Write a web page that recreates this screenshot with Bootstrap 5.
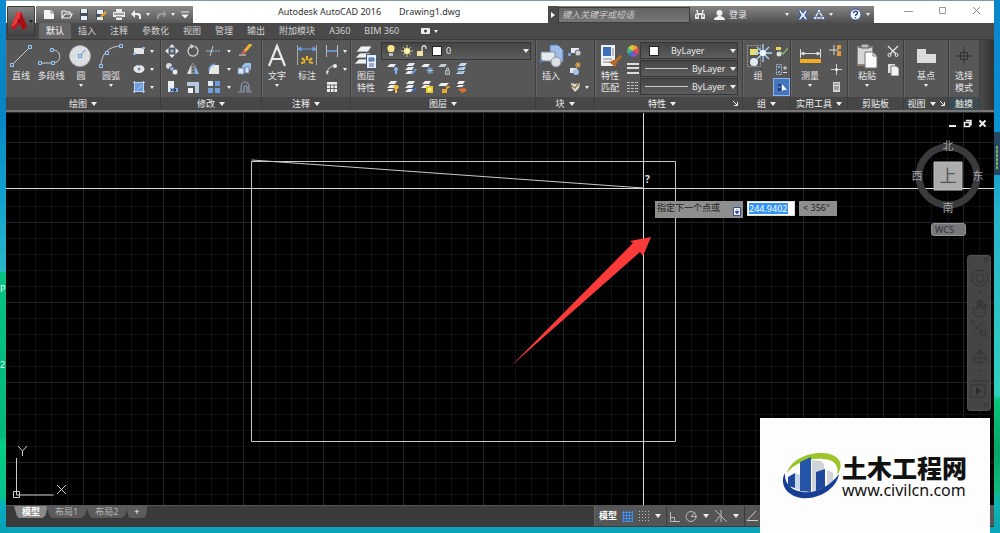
<!DOCTYPE html>
<html lang="zh-CN">
<head>
<meta charset="utf-8">
<meta name="viewport" content="width=device-width, initial-scale=1">
<title>Autodesk AutoCAD 2016 - Drawing1.dwg</title>
<link href="https://cdn.jsdelivr.net/npm/bootstrap@5.3.0/dist/css/bootstrap.min.css" rel="stylesheet">
<style>
  body { font: 9px/12px "Noto Sans", "Noto Sans CJK SC", sans-serif; color: #e4e4e4; background: #0a9fb4; overflow: hidden; }
  button { font: inherit; color: inherit; background: none; border: 0; padding: 0; }
  a { color: inherit; text-decoration: none; }
  svg { display: block; flex: none; }
  .edge { width: 6px; flex: none; overflow: hidden; }
  .edge-l { background: linear-gradient(#0b8bd0 0, #0784c6 20%, #12a3cf 38%, #2bb8c8 51%, #06c282 51%, #05b87c 82%, #07cf84 83%, #05c38c 93%, #0aaec0 95%, #08a0b8 100%); color: #e8fff4; }
  .edge-r { background: linear-gradient(#0b86cc 0, #0a93d2 25%, #27b3cb 40%, #2fd0c0 74%, #08c67c 75%, #06a468 85%, #12bb7c 92%, #0fb4ae 94%, #0aa4b8 100%); }
  .gadget { margin-top: 132px; height: 43px; background: repeating-linear-gradient(#7fae58 0 3px, #39605c 3px 4px); border: 2px solid #274765; border-top-width: 14px; border-bottom-width: 5px; }
  .app-head { background: linear-gradient(#8399a8 0 1px, #fff 1px 23px, #474747 23px); }
  .app-btn { width: 28px; height: 30px; margin: 6px 1px -1px 1px; background: linear-gradient(#858585, #555 60%, #444); border: 1px solid #3c3c3c; border-radius: 1px; flex: none; z-index: 1; gap: 1px; }
  .titlebar { height: 23px; padding-top: 6px; color: #303030; }
  .qat { width: 157px; background: linear-gradient(#8b8b8b, #585858); gap: 6px; padding: 0 4px 0 7px; }
  .doc-title { line-height: 12px; gap: 18px; padding-left: 85px; white-space: nowrap; }
  .info { width: 326px; background: linear-gradient(#858585, #4f4f4f); color: #e6e6e6; }
  .info-arrow { width: 10px; height: 17px; background: #4a4a4a; }
  .search { width: 132px; height: 16px; border: 1px solid #3d3d3d; border-radius: 0; background: linear-gradient(#626262, #777); color: #ddd; font: italic 9px "Noto Sans", "Noto Sans CJK SC", sans-serif; padding: 0 3px; }
  .search::placeholder { color: #c9c9c9; opacity: 1; }
  .wc { width: 120px; gap: 25px; padding-right: 13px; }
  .tabs { height: 16px; background: #4a4a4a; color: #d2d2d2; padding-left: 3px; }
  .tabs button { padding: 0 7px; height: 16px; }
  .tabs button.on { background: #666; color: #fff; border-radius: 2px 2px 0 0; }
  .ribbon { background: #575757; height: 73px; border-top: 1px solid #3c3c3c; border-bottom: 2px solid #777; }
  .panel { border-right: 1px solid #3d3d3d; box-shadow: inset 1px 0 0 #666; flex: none; }
  .panel-body { height: 57px; padding-top: 2px; }
  .panel-foot { height: 13px; background: #474747; color: #eee; gap: 4px; }
  .big { width: 30px; height: 55px; display: flex; flex-direction: column; align-items: center; flex: none; color: #e6e6e6; white-space: nowrap; }
  .big span { line-height: 12px; }
  .big svg { height: 28px; width: 28px; }
  .big .tri { margin-top: 2px; }
  .tri { width: 0; height: 0; border: 3px solid transparent; border-top: 4px solid #eee; border-bottom: 0; flex: none; }
  .tri-s { border-width: 2px; border-top-width: 3px; }
  .rows { display: grid; grid-auto-rows: 18px; align-items: center; align-content: start; justify-items: center; }
  .rows button { height: 16px; }
  .combo { height: 17px; border: 1px solid #363636; background: linear-gradient(#454545, #5d5d5d); padding: 0 1px 0 3px; }
  .combo select { appearance: none; background: none; border: 0; color: #e8e8e8; font: inherit; padding: 0; outline: 0; flex: 1; min-width: 0; }
  .swatch { width: 10px; height: 10px; background: #fff; border: 1px solid #222; }
  .rest { background: linear-gradient(90deg, #4a4a4a, #333); }
  .canvas { min-height: 0; background-color: #000;
    background-image: linear-gradient(90deg, #1f2424 1px, transparent 1px), linear-gradient(#1f2424 1px, transparent 1px), linear-gradient(90deg, #0f1112 1px, transparent 1px), linear-gradient(#0f1112 1px, transparent 1px);
    background-size: 80px 80px, 80px 80px, 16px 16px, 16px 16px; background-position: 77px 29px, 77px 29px, 13px 13px, 13px 13px; border-top: 1px solid #2b2b2b; }
  .dyn { left: 649px; top: 88px; gap: 4px; color: #222; line-height: 14px; }
  .dyn-prompt { width: 88px; height: 17px; background: #8e8e8e; padding: 0 2px; }
  .dyn-value { width: 48px; height: 15px; background: #fff; border: 1px solid #ddd; padding: 1px; }
  .dyn-value input { width: 39px; height: 11px; border: 0; padding: 0; background: #3295f5; color: #fff; font: 9px/11px "Noto Sans", sans-serif; }
  .dyn-angle { width: 38px; height: 15px; background: #8e8e8e; padding-left: 4px; }
  .ucs-cube { right: 10px; top: 26px; width: 76px; }
  .doc-wc { right: 7px; top: 6px; gap: 6px; }
  .wcs { width: 35px; height: 13px; border-radius: 3px; background: #77777c; border: 1px solid #929297; color: #333; text-align: left; padding-left: 3px; line-height: 10px; margin-right: 18px; }
  .navbar-strip { right: 3px; top: 142px; width: 24px; height: 156px; background: #454545; border: 1px solid #505050; border-radius: 3px; }
  .foot { height: 22px; background: #3a3a3a; border-top: 1px solid #555; }
  .sheet { height: 12px; padding: 0 10px 0 9px; background: #5b5b5b; color: #b8b8b8; clip-path: polygon(0 0, 100% 0, 92% 80%, 84% 100%, 14% 100%, 8% 80%); margin-right: -2px; line-height: 12px; }
  .sheet.on { background: #8a8a8a; color: #fff; font-weight: 700; padding: 0 8px; }
  .status { width: 400px; background: #555; border-left: 1px solid #666; height: 20px; }
  .status button { height: 18px; }
  .status .opt { padding: 0 5px; }
  .status .sep { width: 1px; height: 20px; background: #3b3b3b; }
  .watermark { right: 10px; bottom: 0; width: 230px; height: 115px; background: #fdfdfd; color: #111; padding: 0 20px 0 22px; z-index: 5; }
  .wm-name { font: 900 25px/28px "Noto Sans CJK SC", sans-serif; }
  .wm-url { font: 16px/18px "Noto Sans", sans-serif; color: #111; }
</style>
</head>
<body>
<div class="d-flex vh-100 position-relative">
  <div class="edge edge-l d-flex flex-column justify-content-end">
    <div style="height:250px"><div>P</div><div class="mt-5 pt-3">2</div></div>
  </div>

  <div class="flex-grow-1 d-flex flex-column" style="min-width:0">
    <header class="app-head d-flex">
      <button class="app-btn d-flex align-items-center justify-content-center" aria-label="应用程序菜单">
        <svg width="18" height="20" viewBox="0 0 18 20"><path d="M7 1h4l6 15-4 3-3-5H8l-4 5-3-3z" fill="#c5141b"/><path d="M7 1h4l-2 8-4 5-4 2z" fill="#e8393b"/><path d="M9 7l2 5H7z" fill="#7a1012"/><path d="M11 1l6 15-4 3-3-7z" fill="#a80f15"/></svg>
        <span class="tri tri-s" style="border-top-color:#222"></span>
      </button>
      <div class="flex-grow-1">
        <div class="titlebar d-flex">
          <div class="qat d-flex align-items-center">
            <button aria-label="新建"><svg width="12" height="11" viewBox="0 0 12 11"><path d="M1 1h7l3 3v6H1z" fill="#f4f4f4"/><path d="M8 1v3h3" stroke="#888" fill="none"/></svg></button>
            <button aria-label="打开"><svg width="12" height="11" viewBox="0 0 12 11"><path d="M1 9V2h3l1 1h4v2M1 9l3-4h7L9 9z" fill="none" stroke="#eee" stroke-width="1.2"/></svg></button>
            <button aria-label="保存"><svg width="10" height="11" viewBox="0 0 10 11"><path d="M1 0h8v11H1z" fill="#46505c"/><path d="M2 0h6v4H2zM2 7h6v4H2z" fill="#e6eef6"/></svg></button>
            <button aria-label="另存为"><svg width="12" height="12" viewBox="0 0 12 12"><path d="M1 1h8v10H1z" fill="#46505c"/><path d="M2 1h6v4H2zM2 8h6v3H2z" fill="#e6eef6"/><path d="M5 7l5-5 2 2-6 5z" fill="#e8a33a"/></svg></button>
            <button aria-label="打印"><svg width="12" height="11" viewBox="0 0 12 11"><path d="M3 0h6v3h3v5H9v3H3V8H0V3h3z" fill="#ececec"/><path d="M1 5h10M3 8h6" stroke="#555"/></svg></button>
            <button class="d-flex align-items-center gap-1" aria-label="放弃"><svg width="11" height="10" viewBox="0 0 11 10"><path d="M4 0v3h3c2 0 3 1 3 3v3H8V7c0-1-1-2-2-2H4v3L0 4z" fill="#eee"/></svg><span class="tri tri-s"></span></button>
            <button class="d-flex align-items-center gap-1" aria-label="重做"><svg width="11" height="10" viewBox="0 0 11 10"><path d="M7 0v3H4C2 3 1 4 1 6v3h2V7c0-1 1-2 2-2h2v3l4-4z" fill="#999"/></svg><span class="tri tri-s"></span></button>
            <button aria-label="自定义"><svg width="8" height="8" viewBox="0 0 8 8"><path d="M0 1h8M1 4h6L4 7z" fill="#eee" stroke="#eee"/></svg></button>
          </div>
          <div class="doc-title flex-grow-1 d-flex"><span>Autodesk AutoCAD 2016</span><span>Drawing1.dwg</span></div>
          <div class="info d-flex align-items-center">
            <button class="info-arrow d-flex align-items-center justify-content-center" aria-label="折叠"><svg width="4" height="6" viewBox="0 0 4 6"><path d="M0 0l4 3-4 3z" fill="#fff"/></svg></button>
            <input class="search" placeholder="键入关键字或短语" aria-label="键入关键字或短语">
            <button class="ms-1" aria-label="搜索"><svg width="12" height="11" viewBox="0 0 12 11"><path d="M2 1h2v3h4V1h2l1 5v4H7V6H5v4H1V6z" fill="#e8e8e8"/><path d="M2 7h2M8 7h2M2 2v3M10 2v3" stroke="#444"/></svg></button>
            <button class="d-flex align-items-center ms-2" aria-label="登录"><svg class="me-1" width="11" height="12" viewBox="0 0 11 12"><circle cx="5.500" cy="4" r="3" fill="#f0f0f0"/><path d="M0 11c0-3 3-3 4-4h3c1 1 4 1 4 4z" fill="#f0f0f0"/></svg>登录</button>
            <button class="ms-auto" aria-label="登录菜单"><span class="tri tri-s d-block"></span></button>
            <button class="ms-2" aria-label="Exchange"><svg width="12" height="10" viewBox="0 0 12 10"><path d="M1 0h3l2 3 2-3h3L8 5l3 5H8L6 7l-2 3H1l3-5z" fill="#dce8ff" stroke="#2c4b9b"/></svg></button>
            <button class="ms-1 d-flex align-items-center" aria-label="Autodesk 360"><svg width="12" height="11" viewBox="0 0 12 11"><path d="M6 2L2 9h8z" fill="none" stroke="#d8e4fb" stroke-width="1.500"/><g fill="#eaf0ff" stroke="#3a57a0" stroke-width=".7"><circle cx="6" cy="2" r="1.700"/><circle cx="2" cy="9" r="1.600"/><circle cx="10" cy="9" r="1.600"/></g></svg><span class="tri tri-s ms-1"></span></button>
            <button class="ms-3 me-1 d-flex align-items-center" aria-label="帮助"><svg width="13" height="13" viewBox="0 0 13 13"><circle cx="6.500" cy="6.500" r="5.500" fill="#f3f6ff" stroke="#34508f"/><path d="M4.500 5.300c0-3 4-2.600 4-.3 0 1.500-2 1.300-2 3M6.500 9v1.300" fill="none" stroke="#22407f" stroke-width="1.400"/></svg><span class="tri tri-s ms-1"></span></button>
          </div>
          <div class="wc d-flex align-items-start justify-content-end">
            <button aria-label="最小化"><svg width="9" height="9" viewBox="0 0 9 9"><path d="M0 5.500h9" stroke="#999"/></svg></button>
            <button aria-label="最大化"><svg width="9" height="9" viewBox="0 0 9 9"><path d="M1.500 1.500h6v6h-6z" fill="none" stroke="#999"/></svg></button>
            <button aria-label="关闭"><svg width="9" height="9" viewBox="0 0 9 9"><path d="M1 1l7 7M8 1l-7 7" stroke="#888"/></svg></button>
          </div>
        </div>
        <nav class="tabs d-flex">
          <button class="on">默认</button><button>插入</button><button>注释</button><button>参数化</button><button>视图</button><button>管理</button><button>输出</button><button>附加模块</button><button>A360</button><button>BIM 360</button>
          <button class="d-flex align-items-center gap-1 ms-2" aria-label="显示选项"><svg width="9" height="6" viewBox="0 0 9 6"><rect width="9" height="6" rx="1" fill="#eee"/><circle cx="4.500" cy="3" r="1.500" fill="#444"/></svg><span class="tri tri-s"></span></button>
        </nav>
      </div>
    </header>

    <section class="ribbon d-flex">
      <div class="panel" style="width:155px">
        <div class="panel-body d-flex">
          <button class="big"><svg viewBox="0 0 28 28"><path d="M5 23L23 5" stroke="#ccc"/><path d="M3.500 21.500h3v3h-3zM21.500 3.500h3v3h-3z" fill="#41638f" stroke="#9fc4ee"/></svg><span>直线</span></button>
          <button class="big"><svg viewBox="0 0 28 28"><path d="M3 21h13c9 0 9-13 0-13h-1" fill="none" stroke="#ccc"/><path d="M1.500 19.500h3v3h-3zM14.500 19.500h3v3h-3zM13.500 6.500h3v3h-3z" fill="#41638f" stroke="#9fc4ee"/></svg><span>多段线</span></button>
          <button class="big"><svg viewBox="0 0 28 28"><circle cx="13" cy="14" r="10.500" fill="#dcdfe2" stroke="#aaa"/><path d="M13 14l5-6" stroke="#5e8fd0"/><path d="M11.500 12.500h3v3h-3z" fill="#dce8f8" stroke="#5e8fd0"/></svg><span>圆</span><i class="tri tri-s"></i></button>
          <button class="big"><svg viewBox="0 0 28 28"><path d="M4 24C4 12 12 4 24 4" fill="none" stroke="#ccc"/><path d="M2.500 22.500h3v3h-3zM8.500 9.500h3v3h-3zM22.500 2.500h3v3h-3z" fill="#41638f" stroke="#9fc4ee"/></svg><span>圆弧</span><i class="tri tri-s"></i></button>
          <div class="rows ms-1" style="grid-template-columns:18px 8px">
            <button aria-label="矩形"><svg width="14" height="14" viewBox="0 0 14 14"><path d="M2 4h10v6H2z" fill="#e6e6e6"/><path d="M1 9h3v2H1zM10 3h3v2h-3z" fill="#86b4ea"/></svg></button><span class="tri tri-s"></span>
            <button aria-label="椭圆"><svg width="14" height="14" viewBox="0 0 14 14"><ellipse cx="7" cy="7" rx="5.500" ry="4" fill="#e6e6e6"/><path d="M5.500 7h3M7 5.500v3M7 2v2" stroke="#3c6cae"/></svg></button><span class="tri tri-s"></span>
            <button aria-label="图案填充"><svg width="14" height="14" viewBox="0 0 14 14"><path d="M3 3h8v8H3z" fill="#6f9ddb"/><path d="M1 2.500h12M1 11.500h12M2.500 1v12M11.500 1v12" stroke="#b8d4f4"/><path d="M5 10l5-5" stroke="#9cc2f2"/></svg></button><span class="tri tri-s"></span>
          </div>
        </div>
        <div class="panel-foot d-flex align-items-center justify-content-center">绘图<span class="tri"></span></div>
      </div>

      <div class="panel" style="width:101px">
        <div class="panel-body rows" style="grid-template-columns:21px 21px 21px 9px 23px">
          <button aria-label="移动"><svg width="14" height="14" viewBox="0 0 14 14"><path d="M7 0l3 3.500H4zM7 14l3-3.500H4zM0 7l3.500-3v6zM14 7l-3.500-3v6z" fill="#e4e8ee"/><path d="M5.500 5.500h3v3h-3z" fill="#8fb9ec"/></svg></button>
          <button aria-label="旋转"><svg width="14" height="14" viewBox="0 0 14 14"><path d="M5 2.500a5 5 0 1 0 4 0" fill="none" stroke="#c4cad2" stroke-width="1.400"/><path d="M4 0l5 2-4 3z" fill="#c4cad2"/></svg></button>
          <button aria-label="修剪"><svg width="16" height="14" viewBox="0 0 16 14"><path d="M0 7h8" stroke="#8cb8ee"/><path d="M9 7h6" stroke="#8cb8ee" stroke-dasharray="2 1"/><path d="M7 2L4 12" stroke="#ccc"/></svg></button><span class="tri tri-s"></span>
          <button aria-label="删除"><svg width="14" height="14" viewBox="0 0 14 14"><path d="M13 0L6 8" stroke="#efae2f" stroke-width="3"/><path d="M7 7l-3 3" stroke="#ce5a66" stroke-width="3"/><path d="M1 11h7" stroke="#ddd"/></svg></button>
          <button aria-label="复制"><svg width="14" height="14" viewBox="0 0 14 14"><circle cx="4" cy="4" r="3" fill="#d8dce2"/><circle cx="7" cy="7" r="2.500" fill="#9cbce6" stroke="#445"/><circle cx="10" cy="10" r="3" fill="#e8ecf1" stroke="#667"/></svg></button>
          <button aria-label="镜像"><svg width="14" height="14" viewBox="0 0 14 14"><path d="M5.500 2v10H1z" fill="#d9dfe6"/><path d="M8.500 2v10H13z" fill="#8fb3e0"/><path d="M7 1v12" stroke="#aaa" stroke-dasharray="2 1"/></svg></button>
          <button aria-label="圆角"><svg width="14" height="14" viewBox="0 0 14 14"><path d="M2 12V8q0-5 5-5h5v9z" fill="#e5e5e5"/><path d="M2 9q0-6 6-7" fill="none" stroke="#6ea0e0" stroke-width="1.500"/></svg></button><span class="tri tri-s"></span>
          <button aria-label="分解"><svg width="15" height="14" viewBox="0 0 15 14"><path d="M5 4l3-3h6v6l-3 3H5z" fill="#9ebfe8"/><path d="M1 6h6v6H1zM8 5h4v6H8z" fill="#dde6f2" stroke="#6585b0"/></svg></button>
          <button aria-label="拉伸"><svg width="14" height="14" viewBox="0 0 14 14"><path d="M3 1h6v11H3z" fill="#e9edf2"/><path d="M5 8h8v4H5z" fill="#7fa8df"/><path d="M6 10h4M9 8l2 2-2 2" stroke="#123" fill="none"/></svg></button>
          <button aria-label="缩放"><svg width="14" height="14" viewBox="0 0 14 14"><path d="M1 2h12v11H9V6H1z" fill="#b6cae4"/><path d="M2 8h5v5H2z" fill="#eef2f7"/></svg></button>
          <button aria-label="阵列"><svg width="14" height="14" viewBox="0 0 14 14"><path d="M1 1h5v5H1z" fill="#dce6f3"/><path d="M8 1h5v5H8zM1 8h5v5H1zM8 8h5v5H8z" fill="#6f9fdf"/></svg></button><span class="tri tri-s"></span>
          <button aria-label="偏移"><svg width="15" height="14" viewBox="0 0 15 14"><path d="M1 12h3V8c0-8 8-8 8 0v4h3M5 12h2V8c0-3 3-3 3 0v4h1" fill="none" stroke="#8f9db2" stroke-width="1.200"/></svg></button>
        </div>
        <div class="panel-foot d-flex align-items-center justify-content-center">修改<span class="tri"></span></div>
      </div>

      <div class="panel" style="width:89px">
        <div class="panel-body d-flex">
          <button class="big"><svg viewBox="0 0 28 28"><path d="M6 24L14 4l8 20M9 17h10" fill="none" stroke="#e8e8e8" stroke-width="2.200"/></svg><span>文字</span><i class="tri tri-s"></i></button>
          <button class="big"><svg viewBox="0 0 28 28"><path d="M4.500 3v20M23.500 3v20" stroke="#aaa"/><path d="M5 7h18M5 7l3-2v4zM23 7l-3-2v4z" fill="#6aa2ea" stroke="#6aa2ea"/><path d="M8 21l4-1M20 21l-4-1M9 16l3 3M19 16l-3 3M14 14v4" stroke="#f0b323" stroke-width="2.200"/></svg><span>标注</span></button>
          <div class="rows" style="grid-template-columns:19px 8px">
            <button aria-label="线性"><svg width="14" height="14" viewBox="0 0 14 14"><path d="M1.500 1v12M12.500 1v12" stroke="#bbb"/><path d="M2 7h10" stroke="#6aa2ea" stroke-width="1.500"/></svg></button><span class="tri tri-s"></span>
            <button aria-label="引线"><svg width="14" height="14" viewBox="0 0 14 14"><path d="M2 12c0-6 4-7 6-8" fill="none" stroke="#ddd"/><circle cx="10" cy="4" r="2" fill="#eee"/><path d="M1 9h3l-2 4z" fill="#ddd"/></svg></button><span class="tri tri-s"></span>
            <button aria-label="表格"><svg width="12" height="12" viewBox="0 0 12 12"><path d="M1 1h10v10H1z" fill="#eee"/><path d="M1 4h10M1 7.500h10M4.500 4v7M8 4v7" stroke="#666"/></svg></button>
          </div>
        </div>
        <div class="panel-foot d-flex align-items-center justify-content-center">注释<span class="tri"></span></div>
      </div>

      <div class="panel" style="width:185px">
        <div class="panel-body d-flex">
          <button class="big"><svg viewBox="0 0 28 28"><path d="M4 10l5-6h11l-4 6zM3 16l5-5h11l-4 5zM2 22l5-5h11l-4 5z" fill="#eef0f2" stroke="#555" stroke-width=".8"/><path d="M14.500 12.500h10v14h-10z" fill="#e9eef5" stroke="#45597a"/><path d="M17 16h5v3h-5zM17 22h5M17 24h5" fill="#6b93cc" stroke="#4a6ea8"/></svg><span>图层</span><span>特性</span></button>
          <div class="flex-grow-1 pe-1">
            <div class="combo d-flex align-items-center gap-1" style="height:18px">
              <svg width="12" height="14" viewBox="0 0 12 14"><path d="M6 1c-5 0-4 5-2 7h4c2-2 3-7-2-7z" fill="#f8e58a"/><path d="M4 9h4v3H4z" fill="#bbb"/></svg>
              <svg width="12" height="12" viewBox="0 0 12 12"><path d="M6 0v12M0 6h12M2 2l8 8M10 2l-8 8" stroke="#c9c393"/><circle cx="6" cy="6" r="3" fill="#fcf3a4"/></svg>
              <svg width="11" height="12" viewBox="0 0 11 12"><path d="M0 6h6v5H0z" fill="#eedfa0"/><path d="M5 6V3c0-3 4-3 4 0v1" fill="none" stroke="#ddd" stroke-width="1.300"/></svg>
              <span class="swatch"></span>
              <select aria-label="图层"><option>0</option></select><span class="tri"></span>
            </div>
            <div class="rows ps-1" style="grid-template-columns:repeat(5,17px)">
              <button aria-label="关"><svg width="13" height="12" viewBox="0 0 13 12"><path d="M0 4l3-3h6L7 4z" fill="#e8edf3"/><path d="M9 4c-3 0-2 4-1 4v3h2V8c1 0 2-4-1-4z" fill="#88b2e6"/></svg></button>
              <button aria-label="隔离"><svg width="13" height="12" viewBox="0 0 13 12"><path d="M2 3l3-3h6L9 3zM1 7l3-3h6L8 7zM1 11l3-3h5l-2 3z" fill="#e8edf3"/><path d="M8 11l4-5" stroke="#6d9fe0" stroke-width="2"/></svg></button>
              <button aria-label="冻结"><svg width="13" height="12" viewBox="0 0 13 12"><path d="M0 4l3-3h6L7 4z" fill="#e8edf3"/><path d="M9 4v7M5.500 7.500h7M6.500 5l5 5M11.500 5l-5 5" stroke="#9cc5f5"/></svg></button>
              <button aria-label="锁定"><svg width="13" height="12" viewBox="0 0 13 12"><path d="M0 4l3-3h6L7 4z" fill="#c5cbd2"/><path d="M7.500 7.500h4v4h-4zM8.500 7V5h2v2" fill="#6d7f78" stroke="#a9b9b5"/></svg></button>
              <button aria-label="置为当前"><svg width="13" height="12" viewBox="0 0 13 12"><path d="M3 3l3-3h6l-2 3zM2 7l3-3h6L9 7zM1 11l3-3h6l-2 3z" fill="#c7daf2"/><path d="M2 5h6M2 9h6" stroke="#6291cf"/></svg></button>
              <button aria-label="打开所有"><svg width="13" height="12" viewBox="0 0 13 12"><path d="M1 3l3-3h6L8 3zM0 7l3-3h6L7 7zM0 10l2-2h5l-2 2z" fill="#eee"/><path d="M9 4c-4 0-2 4-1 4v4h2V8c2 0 3-4-1-4z" fill="#f2bd3b"/></svg></button>
              <button aria-label="取消隔离"><svg width="13" height="12" viewBox="0 0 13 12"><path d="M2 3l3-3h6L9 3zM1 7l3-3h6L8 7zM1 11l3-3h5l-2 3z" fill="#e8edf3"/><path d="M8 11l4-4" stroke="#396dc0" stroke-width="2"/></svg></button>
              <button aria-label="解冻"><svg width="13" height="12" viewBox="0 0 13 12"><path d="M1 3l3-3h6L8 3zM0 7l3-3h6L7 7z" fill="#eee"/><path d="M5 5h7v7H5z" fill="#e8ca2b"/><circle cx="8.500" cy="8.500" r="2" fill="#fff98d"/></svg></button>
              <button aria-label="解锁"><svg width="13" height="12" viewBox="0 0 13 12"><path d="M0 5l3-3h8L8 5z" fill="#eee"/><path d="M4 8h5v4H4z" fill="#e7a92f"/><path d="M9 8V6h3" fill="none" stroke="#e7a92f" stroke-width="1.500"/></svg></button>
              <button aria-label="匹配图层"><svg width="13" height="12" viewBox="0 0 13 12"><path d="M2 3l2-3h6L8 3zM1 6l3-2h5L7 6z" fill="#eee"/><path d="M3 8l7-1 2 3-5 2z" fill="#d5732c"/></svg></button>
            </div>
          </div>
        </div>
        <div class="panel-foot d-flex align-items-center justify-content-center">图层<span class="tri"></span></div>
      </div>

      <div class="panel" style="width:59px">
        <div class="panel-body d-flex">
          <button class="big"><svg viewBox="0 0 28 28"><path d="M13 3h8l5 5v12H13z" fill="#9fbde8" stroke="#567bb0"/><path d="M4 10h14v9H4z" fill="#e6eaf0" stroke="#7d8794"/><circle cx="19" cy="20" r="5" fill="#dcdfe3" stroke="#8d939c"/><path d="M2.500 17.500h3v3h-3z" fill="#4d7fc4"/></svg><span>插入</span></button>
          <div class="rows" style="grid-template-columns:17px 8px">
            <button aria-label="创建"><svg width="14" height="14" viewBox="0 0 14 14"><path d="M3 4h8v5H3z" fill="#e6eaf0"/><circle cx="10" cy="9" r="3" fill="#c9ced6" stroke="#666"/><path d="M0 9h3v3H0z" fill="#6e9fe0"/></svg></button><span></span>
            <button aria-label="编辑"><svg width="14" height="14" viewBox="0 0 14 14"><path d="M2 6h7v5H2z" fill="#dfe6ef"/><circle cx="8" cy="10" r="3" fill="#a9c2e4"/><path d="M10 0v6M7 3h6M8 1l4 4M12 1L8 5" stroke="#f0a93c"/></svg></button><span></span>
            <button aria-label="编辑属性"><svg width="14" height="14" viewBox="0 0 14 14"><path d="M3 3l4 1 5-1-1 5-4 4-3-4z" fill="#dcdcdc"/><path d="M3 5l4 3 4-5" fill="none" stroke="#947b35" stroke-width="1.500"/></svg></button><span class="tri tri-s"></span>
          </div>
        </div>
        <div class="panel-foot d-flex align-items-center justify-content-center">块<span class="tri"></span></div>
      </div>

      <div class="panel" style="width:148px">
        <div class="panel-body d-flex">
          <button class="big"><svg viewBox="0 0 28 28"><path d="M5 3h14v21H5z" fill="#eef1f5"/><path d="M7 5h8v9H7z" fill="#3b70b8"/><path d="M17 6v8M7 17h9M7 20h7" stroke="#888"/><path d="M13 20l7-3 4-4 2 2-4 4-3 6z" fill="#b56a28"/></svg><span>特性</span><span>匹配</span></button>
          <div class="rows" style="grid-template-columns:15px">
            <svg width="12" height="12" viewBox="0 0 12 12"><path d="M6 6V0a6 6 0 0 1 5 3z" fill="#f3a03a"/><path d="M6 6l5-3a6 6 0 0 1 0 6z" fill="#e8503c"/><path d="M6 6l5 3a6 6 0 0 1-5 3z" fill="#a345b5"/><path d="M6 6v6a6 6 0 0 1-5-3z" fill="#3b6fd4"/><path d="M6 6L1 9a6 6 0 0 1 0-6z" fill="#3eb58a"/><path d="M6 6L1 3a6 6 0 0 1 5-3z" fill="#c5d33b"/></svg>
            <svg width="12" height="12" viewBox="0 0 12 12"><path d="M0 1h12M0 5h12M0 10h12" stroke="#ddd" stroke-width="2"/></svg>
            <svg width="12" height="12" viewBox="0 0 12 12"><path d="M0 1.500h12M0 4.500h12M0 7.500h12M0 10.500h12" stroke="#bbb" stroke-dasharray="3 1"/></svg>
          </div>
          <div class="flex-grow-1 me-1 d-flex flex-column" style="gap:1px">
            <div class="combo d-flex align-items-center ps-2"><span class="swatch me-2"></span><select class="ps-1" aria-label="颜色"><option>ByLayer</option></select><span class="tri"></span></div>
            <div class="combo d-flex align-items-center"><svg class="me-1" width="44" height="3"><path d="M1 1.500h43" stroke="#ccc"/></svg><select aria-label="线宽"><option>ByLayer</option></select><span class="tri"></span></div>
            <div class="combo d-flex align-items-center"><svg class="me-1" width="44" height="3"><path d="M1 1.500h43" stroke="#ccc"/></svg><select aria-label="线型"><option>ByLayer</option></select><span class="tri"></span></div>
          </div>
        </div>
        <div class="panel-foot d-flex align-items-center pe-1"><span class="ms-auto">特性</span><span class="tri me-auto"></span><svg width="5" height="5"><path d="M0 0l4 4M4.500 1v3.500H1" fill="none" stroke="#eee"/></svg></div>
      </div>

      <div class="panel" style="width:48px">
        <div class="panel-body d-flex">
          <button class="big"><svg viewBox="0 0 28 28"><path d="M3.500 3.500h13v21h-13z" fill="none" stroke="#999" stroke-dasharray="2 1"/><path d="M6 7h8v6H6z" fill="#e9e06a"/><circle cx="10" cy="20" r="4" fill="#dfeaf5"/><path d="M19 2v18M10 11h18M13 5l12 12M25 5L13 17" stroke="#aad8ff" stroke-width="1.300"/><circle cx="19" cy="11" r="3" fill="#eff9ff"/></svg><span>组</span></button>
          <div class="rows flex-grow-1">
            <button aria-label="解除编组"><svg width="13" height="13" viewBox="0 0 13 13"><path d="M1 2h5v3H1z" fill="#e7d75c"/><circle cx="4" cy="9" r="2.500" fill="#ddd"/><path d="M6 7l2 2 5-6" fill="none" stroke="#88b070" stroke-width="1.500"/></svg></button>
            <button aria-label="组编辑"><svg width="13" height="13" viewBox="0 0 13 13"><path d="M1.500 1.500h5v10h-5z" fill="none" stroke="#abc" stroke-dasharray="2 1"/><path d="M3 3h2v2H3zM3 8h2v2H3z" fill="#7ea9df"/><path d="M8 5h4M10 3v4M8 9.500h4" stroke="#ddd"/></svg></button>
            <button aria-label="组选择" style="background:#4474bd;outline:1px solid #90b5e8"><svg width="15" height="14" viewBox="0 0 15 14"><path d="M4 4h3v2H4zM4 8h3v3H4z" fill="#243f6b"/><path d="M8 4l5 6H9l-1 2z" fill="#fff"/></svg></button>
          </div>
        </div>
        <div class="panel-foot d-flex align-items-center justify-content-center">组<span class="tri"></span></div>
      </div>

      <div class="panel" style="width:57px">
        <div class="panel-body d-flex ps-1">
          <button class="big"><svg viewBox="0 0 28 28"><path d="M4.500 7v9M24.500 7v9M5 11.500h19M5 11.500l3-1.500v3zM24 11.500L21 10v3z" fill="#ddd" stroke="#ddd"/><path d="M4 17h21v4H4z" fill="#f0ac22"/></svg><span>测量</span><i class="tri tri-s"></i></button>
          <div class="rows flex-grow-1">
            <button aria-label="快速选择"><svg width="14" height="14" viewBox="0 0 14 14"><path d="M5 1v10M0 6h10" stroke="#ddd"/><path d="M8 1h4v4H8zM8 7h4v5H8z" fill="#e29a3e"/></svg></button>
            <button aria-label="点样式"><svg width="13" height="13" viewBox="0 0 13 13"><path d="M6.500 1v11M1 6.500h11" stroke="#ccc"/><circle cx="6.500" cy="6.500" r="1.500" fill="#eee"/></svg></button>
            <button aria-label="计算器"><svg width="9" height="12" viewBox="0 0 9 12"><path d="M1 1h7v10H1z" fill="#d6d6d6"/><path d="M2 3h5M2 6h5M2 8h5" stroke="#666"/></svg></button>
          </div>
        </div>
        <div class="panel-foot d-flex align-items-center justify-content-center">实用工具<span class="tri"></span></div>
      </div>

      <div class="panel" style="width:56px">
        <div class="panel-body d-flex ps-1">
          <button class="big"><svg viewBox="0 0 28 28"><path d="M4 4h16v20H4z" fill="#8d8377"/><path d="M5 6h14v16H5z" fill="#d5d5d5"/><path d="M8 2h8v4H8z" fill="#b9b9b9" stroke="#555"/><path d="M12 10h8l4 4v12H12z" fill="#fafafa" stroke="#777"/><path d="M20 10v4h4" fill="none" stroke="#777"/></svg><span>粘贴</span><i class="tri tri-s"></i></button>
          <div class="rows flex-grow-1">
            <button aria-label="剪切"><svg width="12" height="12" viewBox="0 0 12 12"><path d="M1 1l8 8M11 1L3 9" stroke="#e5e5e5" stroke-width="1.300"/><circle cx="2.500" cy="10" r="1.500" fill="none" stroke="#eee"/><circle cx="9.500" cy="10" r="1.500" fill="none" stroke="#eee"/></svg></button>
            <button aria-label="复制剪裁"><svg width="12" height="13" viewBox="0 0 12 13"><path d="M1 1h7v9H1z" fill="#ddd"/><path d="M4 3h5l3 2v8H4z" fill="#f3f3f3" stroke="#777"/></svg></button>
          </div>
        </div>
        <div class="panel-foot d-flex align-items-center justify-content-center">剪贴板</div>
      </div>

      <div class="panel" style="width:45px">
        <div class="panel-body d-flex justify-content-center">
          <button class="big"><svg viewBox="0 0 28 28"><path d="M5 7h9v5h10v9H5z" fill="#dcdcdc"/></svg><span>基点</span><i class="tri tri-s"></i></button>
        </div>
        <div class="panel-foot d-flex align-items-center justify-content-center">视图<span class="tri"></span><svg width="5" height="5"><path d="M0 0l4 4M4.500 1v3.500H1" fill="none" stroke="#eee"/></svg></div>
      </div>

      <div class="panel" style="width:31px">
        <div class="panel-body d-flex"><button class="big"><svg viewBox="0 0 28 28"><path d="M14 5v18M5 14h18M10.500 10.500h7v7h-7z" fill="none" stroke="#333"/></svg><span>选择</span><span>模式</span></button></div>
        <div class="panel-foot d-flex align-items-center justify-content-center" style="background:#3d4c51">触摸</div>
      </div>
      <div class="rest flex-grow-1"></div>
    </section>

    <main class="canvas flex-grow-1 position-relative overflow-hidden">
      <!-- drawing entities, crosshair and UCS icon -->
      <svg class="position-absolute w-100 h-100" style="left:0;top:0">
        <g transform="translate(-6 -113)">
          <path d="M251.500 161.500h424v280h-424zM251.500 160l392 28" fill="none" stroke="#c8c8c8"/>
          <path d="M643.500 113v400M6 188.500h2000" stroke="#dcdcdc"/>
          <path d="M511 366l122-123-3-2 21-4-8 19-3-4z" fill="#fb3a3a"/>
          <path d="M16.500 458v37h37M13.500 491.500h6v6h-6z" fill="none" stroke="#cfcfcf"/>
          <path d="M18 446l4.500 5 4.500-5M22.500 451v5M57 485l9 9M66 485l-9 9" fill="none" stroke="#cfcfcf"/>
        </g>
      </svg>
      <div class="position-absolute fw-bold" style="left:639px;top:60px;font-size:10px">?</div>
      <div class="dyn position-absolute d-flex">
        <div class="dyn-prompt d-flex justify-content-between"><label for="dist">指定下一个点或</label><svg class="align-self-end" width="8" height="11" viewBox="0 0 8 11"><path d="M.500 .500h7v8h-7z" fill="#eef" stroke="#34508f"/><path d="M4 2v3M2 4.500h4L4 7z" fill="#223b80" stroke="#223b80" stroke-width=".5"/></svg></div>
        <div class="dyn-value d-flex"><input id="dist" value="244.9402"></div>
        <div class="dyn-angle">&lt; 356°</div>
      </div>
      <div class="doc-wc position-absolute d-flex">
        <button aria-label="最小化图形"><svg width="9" height="9"><path d="M1 7h7" stroke="#eee" stroke-width="2"/></svg></button>
        <button aria-label="还原图形"><svg width="9" height="9"><path d="M1.500 3.500h5v4h-5zM3 1.500h5v5" fill="none" stroke="#eee" stroke-width="1.500"/></svg></button>
        <button aria-label="关闭图形"><svg width="9" height="9"><path d="M1.500 1.500l6 6M7.500 1.500l-6 6" stroke="#eee" stroke-width="2"/></svg></button>
      </div>
      <div class="ucs-cube position-absolute d-flex flex-column align-items-end">
        <svg width="76" height="76" viewBox="0 0 76 76" class="mb-2">
          <circle cx="40" cy="37" r="29" fill="none" stroke="#3a3a3c" stroke-width="7"/>
          <path d="M26 23h28v28H26z" fill="#acacac" stroke="#bbb"/>
          <g fill="#a4a4a4" font-size="11" text-anchor="middle"><text x="40" y="11">北</text><text x="9" y="41">西</text><text x="70" y="41">东</text><text x="40" y="73">南</text></g>
          <text x="40" y="43" font-size="17" text-anchor="middle" fill="#555">上</text>
        </svg>
        <button class="wcs">WCS</button>
      </div>
      <div class="navbar-strip position-absolute">
        <svg width="22" height="154" viewBox="0 0 22 154"><g fill="none" stroke="#343434"><circle cx="18" cy="4" r="2"/><circle cx="12" cy="22" r="8"/><circle cx="12" cy="22" r="4"/><path d="M11 36h3M11 88h3M11 115h3"/><path d="M7 56l-3-4 2-1 3 3v-8h2v6-8h2v8-7h2v8l2-5 1 1-1 7q-1 5-6 5-4 0-6-5z"/><path d="M4 66l11 12M15 66L4 77M3 69v-4h4"/><circle cx="15" cy="77" r="3"/><path d="M17 79l4 4M4 102h15M12 94v16M9 97l3-4 3 4M6 99q6-4 12 0v6q-6 4-12 0z"/><path d="M3 125h17M3 129h14v12H3z"/><circle cx="18" cy="149" r="2"/></g><path d="M8 131l5 4-5 4z" fill="#2a2a2a"/></svg>
      </div>
    </main>

    <footer class="foot d-flex">
      <div class="d-flex ps-2">
        <button class="sheet on">模型</button><button class="sheet">布局1</button><button class="sheet">布局2</button><button class="sheet px-2 text-white" aria-label="新建布局">+</button>
      </div>
      <div class="status d-flex align-items-center ms-auto">
        <button class="px-1 fw-bold text-white">模型</button>
        <button aria-label="栅格"><svg width="13" height="13" viewBox="0 0 13 13"><path d="M1 2.500h11M1 5.500h11M1 8.500h11M1 11.500h11M2.500 1v11M5.500 1v11M8.500 1v11M11.500 1v11" stroke="#3d8df0"/></svg></button>
        <button aria-label="捕捉" class="ms-1"><svg width="12" height="12" viewBox="0 0 12 12"><path d="M1 1.500h10M1 4.500h10M1 7.500h10M1 10.500h10" stroke="#bbb" stroke-dasharray="1 2"/></svg></button>
        <button class="opt" aria-label="捕捉选项"><span class="tri d-block"></span></button>
        <span class="sep"></span>
        <button aria-label="正交"><svg width="14" height="13" viewBox="0 0 14 13"><path d="M3.500 2v9.500H13M3.500 7.500h4v4" fill="none" stroke="#bbb"/></svg></button>
        <button class="ms-1" aria-label="极轴"><svg width="13" height="13" viewBox="0 0 13 13"><circle cx="6" cy="6.500" r="5" fill="none" stroke="#bbb"/><path d="M6 6.500h6M6 6.500l4-4" stroke="#bbb"/></svg></button>
        <button class="opt" aria-label="极轴选项"><span class="tri d-block"></span></button>
        <button aria-label="等轴测"><svg width="14" height="14" viewBox="0 0 14 14"><path d="M1 1l12 12M7 1v12M1 13l5-6" fill="none" stroke="#bbb"/></svg></button>
        <button class="opt" aria-label="等轴测选项"><span class="tri d-block"></span></button>
        <span class="sep"></span>
        <button aria-label="对象捕捉追踪"><svg width="14" height="12" viewBox="0 0 14 12"><path d="M11 1L2 10.500h11" fill="none" stroke="#ccc"/></svg></button>
      </div>
    </footer>
    <div style="height:6px;background:#0aa3b8;flex:none"></div>
  </div>

  <div class="edge edge-r"><div class="gadget"></div></div>

  <a href="#" class="watermark position-absolute d-flex align-items-center">
    <svg width="60" height="52" viewBox="0 0 60 52">
      <path d="M5 23C10 2 52-4 58 12c2 6-2 12-3 13 2-8-1-15-13-16C27 7 11 14 5 23z" fill="#9cc52c"/>
      <path d="M30 10l9 1 3 3v26l-12 2z" fill="#d0d3d7"/><path d="M45 20l6 3v11l-6 4z" fill="#d0d3d7"/>
      <path d="M18 12l11-5v35l-11-1z" fill="#2455a8"/><path d="M6 27l7-4v15l-7-2zM34 22l9-3v18l-9 4z" fill="#1d489b"/><path d="M13 23l5 2v15l-5-1z" fill="#c9d5ea"/>
      <path d="M3 23c-6 10 1 23 16 25 20 2 36-11 38-24-8 11-22 20-36 18C10 41 2 34 3 23z" fill="#163f94"/>
    </svg>
    <span><span class="wm-name d-block">土木工程网</span><span class="wm-url d-block">www.civilcn.com</span></span>
  </a>
</div>
<script src="https://cdn.jsdelivr.net/npm/bootstrap@5.3.0/dist/js/bootstrap.bundle.min.js"></script>
</body>
</html>
